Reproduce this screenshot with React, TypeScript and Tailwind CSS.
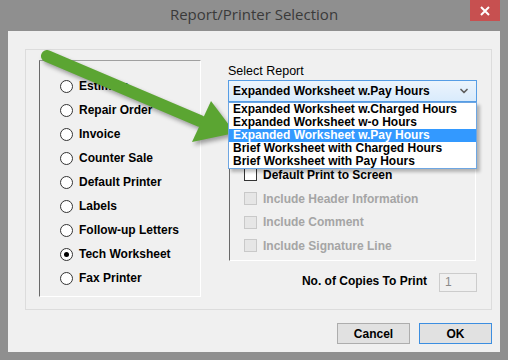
import { ChevronDown } from "lucide-react";

const radios = [
  "Estimate",
  "Repair Order",
  "Invoice",
  "Counter Sale",
  "Default Printer",
  "Labels",
  "Follow-up Letters",
  "Tech Worksheet",
  "Fax Printer",
];

const reports = [
  "Expanded Worksheet w.Charged Hours",
  "Expanded Worksheet w-o Hours",
  "Expanded Worksheet w.Pay Hours",
  "Brief Worksheet with Charged Hours",
  "Brief Worksheet with Pay Hours",
];

const options = [
  { label: "Default Print to Screen", enabled: true },
  { label: "Include Header Information", enabled: false },
  { label: "Include Comment", enabled: false },
  { label: "Include Signature Line", enabled: false },
];

function Radio({ label, checked }: { label: string; checked?: boolean }) {
  return (
    <div className="flex h-[24px] items-center gap-[6px]">
      <span className="flex h-[13px] w-[13px] items-center justify-center rounded-full border border-[#333] bg-white">
        {checked && <span className="h-[5px] w-[5px] rounded-full bg-black" />}
      </span>
      <span>{label}</span>
    </div>
  );
}

function Check({ label, enabled }: { label: string; enabled: boolean }) {
  return (
    <div className="flex h-[23.7px] items-center gap-[6px]">
      <span
        className={
          enabled
            ? "h-[13px] w-[13px] border border-[#333] bg-white"
            : "h-[13px] w-[13px] border border-[#c9c9c9] bg-[#e6e6e6]"
        }
      />
      <span className={enabled ? "text-black" : "text-[#a5a5a5]"}>{label}</span>
    </div>
  );
}

export default function App() {
  return (
    <div className="relative flex h-[360px] w-[508px] flex-col bg-[#8f8f8f] font-['Liberation_Sans',Arial,sans-serif] text-[12px] font-bold text-black">
      <div className="relative flex h-[31px] shrink-0 items-start justify-center pt-[4px]">
        <span className="font-['Open_Sans',sans-serif] text-[15px] font-normal leading-[20px] text-[#3a3a3a]">
          Report/Printer Selection
        </span>
        <div className="absolute right-[8px] top-0 flex h-[21px] w-[30px] items-center justify-center bg-[#c75050]">
          <svg width="10" height="10" viewBox="0 0 10 10">
            <path d="M1 1 L9 9 M9 1 L1 9" stroke="white" strokeWidth="2" />
          </svg>
        </div>
      </div>

      <div className="mx-[8px] flex h-[321px] flex-col bg-[#f0f0f0] pl-[17px] pr-[8px] pt-[18px]">
        <div className="flex h-[261px] border border-[#dcdcdc] pl-[13px] pr-[14px] pt-[10px]">
          <div className="h-[237px] w-[162px] border-b border-l border-r border-t border-b-white border-l-[#696969] border-r-white border-t-[#a0a0a0] pl-[20px] pt-[13px]">
            {radios.map((r) => (
              <Radio key={r} label={r} checked={r === "Tech Worksheet"} />
            ))}
          </div>

          <div className="ml-[27px] flex w-[249px] flex-col">
            <div className="pt-[3px] text-[12.5px] font-normal leading-[16px]">Select Report</div>
            <div className="relative mt-[1px]">
              <div className="flex h-[22px] items-center justify-between border border-[#569de5] bg-gradient-to-b from-[#ecf4fc] to-[#d9ebfc] pl-[4px] pr-[6px]">
                <span>Expanded Worksheet w.Pay Hours</span>
                <ChevronDown size={12} strokeWidth={3.5} className="text-[#606060]" />
              </div>
              <div className="absolute left-0 right-0 top-[22px] z-10 border border-[#6ea6e2] bg-white shadow-[3px_3px_3px_rgba(0,0,0,0.25)]">
                {reports.map((r, i) => (
                  <div
                    key={r}
                    className={
                      i === 2
                        ? "h-[13px] bg-[#3399ff] pl-[4px] leading-[13px] text-white"
                        : "h-[13px] pl-[4px] leading-[13px]"
                    }
                  >
                    {r}
                  </div>
                ))}
              </div>
            </div>

            <div className="ml-[1px] mt-[8px] h-[151px] w-[247px] border-b border-l border-r border-t border-b-white border-l-[#696969] border-r-white border-t-[#a0a0a0] pl-[14px] pt-[52px]">
              {options.map((o) => (
                <Check key={o.label} label={o.label} enabled={o.enabled} />
              ))}
            </div>

            <div className="mt-[11px] flex items-center justify-end gap-[12px]">
              <span className="pb-[2px]">No. of Copies To Print</span>
              <div className="flex h-[19px] w-[38px] items-center border border-[#cccccc] bg-[#f0f0f0] pl-[5px] font-normal text-[#8a8a8a]">
                1
              </div>
            </div>
          </div>
        </div>

        <div className="mt-[13px] flex justify-end gap-[9px]">
          <button className="h-[21px] w-[73px] border border-[#adadad] bg-[#e1e1e1] text-[12px] font-bold">
            Cancel
          </button>
          <button className="h-[21px] w-[73px] border border-[#3c8ee0] bg-[#e1e1e1] text-[12px] font-bold">
            OK
          </button>
        </div>
      </div>

      <svg
        className="pointer-events-none absolute left-0 top-0"
        width="508"
        height="360"
        viewBox="0 0 508 360"
        style={{ filter: "drop-shadow(2px 3px 2px rgba(0,0,0,0.35))" }}
      >
        <line x1="47" y1="56" x2="200" y2="121" stroke="#5ba532" strokeWidth="12" strokeLinecap="round" />
        <polygon points="211,101 192,142 235,133" fill="#5ba532" />
      </svg>
    </div>
  );
}
